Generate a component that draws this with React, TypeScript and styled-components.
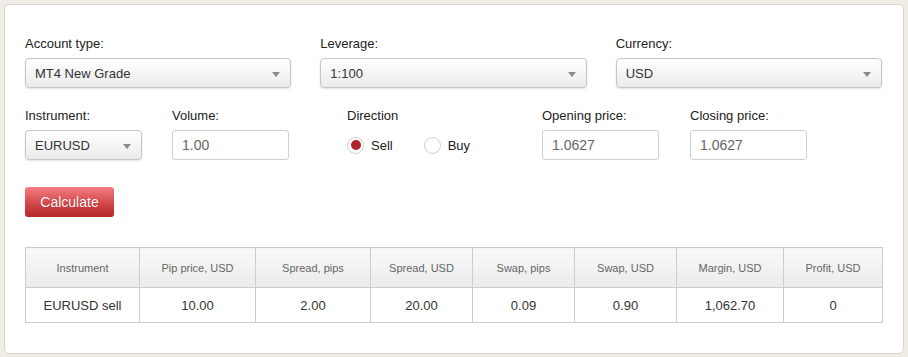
import React from "react";
import styled, { createGlobalStyle } from "styled-components";

const Global = createGlobalStyle`
  html, body { margin: 0; padding: 0; background: #efede6; }
  body { font-family: "Liberation Sans", Arial, sans-serif; }
  * { box-sizing: border-box; }
`;

const Page = styled.div`
  padding: 4px;
  width: 908px;
  height: 357px;
`;

const Card = styled.div`
  width: 900px;
  height: 350px;
  background: #fff;
  border: 1px solid #d7d5cd;
  border-radius: 5px;
  padding: 31px 20px 0 20px;
`;

const TopRow = styled.div`
  display: grid;
  grid-template-columns: 1fr 1fr 1fr;
  column-gap: 29px;
  width: 857px;
`;

const SecondRow = styled.div`
  display: grid;
  grid-template-columns: 117px 117px 193px 118px 117px;
  column-gap: 30px;
  margin-top: 20px;
`;

const Field = styled.div<{ $indent?: number; $width?: number }>`
  display: flex;
  flex-direction: column;
  padding-left: ${(p) => p.$indent ?? 0}px;
  ${(p) => (p.$width ? `width: ${p.$width}px;` : "")}
`;

const Label = styled.label`
  font-size: 13px;
  line-height: 16px;
  color: #222;
  margin-bottom: 6px;
`;

const SelectBox = styled.div`
  position: relative;
  height: 30px;
  border: 1px solid #c4c4c4;
  border-radius: 4px;
  background: linear-gradient(#ffffff, #ebebeb);
  box-shadow: 0 1px 2px rgba(0, 0, 0, 0.12);
  display: flex;
  align-items: center;
  padding: 0 9px;
  font-size: 13px;
  color: #333;
`;

const Arrow = styled.span`
  position: absolute;
  right: 10px;
  top: 13px;
  width: 0;
  height: 0;
  border-left: 4px solid transparent;
  border-right: 4px solid transparent;
  border-top: 5px solid #8a8a8a;
`;

const TextInput = styled.div`
  height: 30px;
  border: 1px solid #cfcfcf;
  border-radius: 3px;
  background: #fff;
  display: flex;
  align-items: center;
  padding: 0 9px;
  font-size: 14px;
  color: #666;
`;

const RadioGroup = styled.div`
  height: 30px;
  display: flex;
  align-items: center;
  gap: 31px;
`;

const RadioOption = styled.div`
  display: flex;
  align-items: center;
  gap: 7px;
  font-size: 13px;
  color: #222;
`;

const RadioCircle = styled.span<{ $checked?: boolean }>`
  width: 17px;
  height: 17px;
  border-radius: 50%;
  border: 1px solid #cdcdcd;
  background: #fff;
  display: flex;
  align-items: center;
  justify-content: center;
  &::after {
    content: "";
    width: 10px;
    height: 10px;
    border-radius: 50%;
    background: ${(p) => (p.$checked ? "#b3232b" : "transparent")};
  }
`;

const Button = styled.button`
  margin-top: 27px;
  width: 89px;
  height: 30px;
  border: none;
  border-radius: 3px;
  background: linear-gradient(#f47f80, #d2474a 55%, #b52528);
  color: #fff;
  font-family: "Liberation Sans", Arial, sans-serif;
  font-size: 14px;
  text-shadow: 0 0 1px rgba(120, 0, 0, 0.5);
  padding: 0;
  cursor: pointer;
  display: block;
`;

const Table = styled.table`
  margin-top: 30px;
  border-collapse: collapse;
  width: 857px;
  table-layout: fixed;
`;

const Th = styled.th`
  height: 40px;
  border: 1px solid #cccccc;
  background: linear-gradient(#f9f9f9, #ebebeb);
  font-weight: normal;
  font-size: 11px;
  color: #666;
  text-align: center;
  padding: 0;
`;

const Td = styled.td`
  height: 35px;
  border: 1px solid #cccccc;
  font-size: 13px;
  color: #333;
  text-align: center;
  padding: 0;
`;

const columns = [
  { title: "Instrument", width: 114, value: "EURUSD sell" },
  { title: "Pip price, USD", width: 116, value: "10.00" },
  { title: "Spread, pips", width: 115, value: "2.00" },
  { title: "Spread, USD", width: 102, value: "20.00" },
  { title: "Swap, pips", width: 102, value: "0.09" },
  { title: "Swap, USD", width: 102, value: "0.90" },
  { title: "Margin, USD", width: 107, value: "1,062.70" },
  { title: "Profit, USD", width: 99, value: "0" },
];

function Select({ value }: { value: string }) {
  return (
    <SelectBox>
      {value}
      <Arrow />
    </SelectBox>
  );
}

export default function App() {
  return (
    <>
      <Global />
      <Page>
        <Card>
          <TopRow>
            <Field>
              <Label>Account type:</Label>
              <Select value="MT4 New Grade" />
            </Field>
            <Field>
              <Label>Leverage:</Label>
              <Select value="1:100" />
            </Field>
            <Field>
              <Label>Currency:</Label>
              <Select value="USD" />
            </Field>
          </TopRow>
          <SecondRow>
            <Field>
              <Label>Instrument:</Label>
              <Select value="EURUSD" />
            </Field>
            <Field>
              <Label>Volume:</Label>
              <TextInput>1.00</TextInput>
            </Field>
            <Field $indent={28}>
              <Label>Direction</Label>
              <RadioGroup>
                <RadioOption>
                  <RadioCircle $checked />
                  Sell
                </RadioOption>
                <RadioOption>
                  <RadioCircle />
                  Buy
                </RadioOption>
              </RadioGroup>
            </Field>
            <Field $width={117}>
              <Label>Opening price:</Label>
              <TextInput>1.0627</TextInput>
            </Field>
            <Field>
              <Label>Closing price:</Label>
              <TextInput>1.0627</TextInput>
            </Field>
          </SecondRow>
          <Button>Calculate</Button>
          <Table>
            <colgroup>
              {columns.map((c) => (
                <col key={c.title} style={{ width: c.width }} />
              ))}
            </colgroup>
            <thead>
              <tr>
                {columns.map((c) => (
                  <Th key={c.title}>{c.title}</Th>
                ))}
              </tr>
            </thead>
            <tbody>
              <tr>
                {columns.map((c) => (
                  <Td key={c.title}>{c.value}</Td>
                ))}
              </tr>
            </tbody>
          </Table>
        </Card>
      </Page>
    </>
  );
}
